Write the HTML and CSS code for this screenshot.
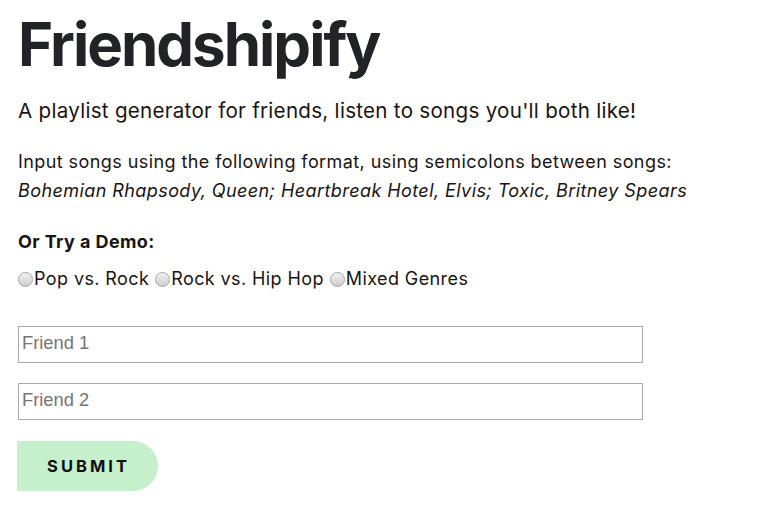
FILE: index.html
```html
<!DOCTYPE html>
<html>
<head>
<meta charset="utf-8">
<link rel="stylesheet" href="styles.css">
</head>
<body>
<main class="page">
  <h1 class="title">Friendshipify</h1>
  <p class="subtitle">A playlist generator for friends, listen to songs you'll both like!</p>
  <p class="instructions">Input songs using the following format, using semicolons between songs:<br><em>Bohemian Rhapsody, Queen; Heartbreak Hotel, Elvis; Toxic, Britney Spears</em></p>
  <p class="demo-label">Or Try a Demo:</p>
  <div class="radios">
    <label class="radio"><span class="dot"></span>Pop vs. Rock</label>
    <label class="radio"><span class="dot"></span>Rock vs. Hip Hop</label>
    <label class="radio"><span class="dot"></span>Mixed Genres</label>
  </div>
  <form class="form">
    <input class="field" type="text" placeholder="Friend 1">
    <input class="field" type="text" placeholder="Friend 2">
    <button class="submit" type="button">SUBMIT</button>
  </form>
</main>
</body>
</html>
```

FILE: styles.css
```css
* { box-sizing: border-box; }
body {
  margin: 0;
  background: #fff;
  color: #191414;
  font-family: "Inter", "Noto Sans", sans-serif;
}
.page {
  padding: 0 18px;
}
.title {
  margin: 0;
  padding-top: 14px;
  font-size: 60px;
  line-height: 60px;
  font-weight: 700;
  letter-spacing: -2px;
  color: #222326;
}
.subtitle {
  margin: 24px 0 0;
  font-size: 20.6px;
  line-height: 26px;
  letter-spacing: 0.27px;
}
.instructions {
  margin: 24px 0 0;
  font-size: 18px;
  line-height: 28.5px;
  letter-spacing: 0.42px;
}
.instructions em { font-style: italic; }
.demo-label {
  margin: 26px 0 0;
  font-size: 18px;
  font-weight: 700;
  line-height: 22px;
  letter-spacing: 0.4px;
}
.radios {
  display: flex;
  margin-top: 14px;
  font-size: 18px;
  line-height: 24px;
  letter-spacing: 0.4px;
  gap: 6px;
}
.radio {
  display: flex;
  align-items: center;
}
.dot {
  width: 15px;
  height: 15px;
  border-radius: 50%;
  border: 1px solid #a6a6a6;
  background: linear-gradient(#f2f2f2, #cdcdcd);
  margin-right: 1px;
}
.form {
  display: flex;
  flex-direction: column;
  align-items: flex-start;
  margin-top: 35px;
}
.field {
  width: 625px;
  height: 37px;
  border: 1px solid #a9a9a9;
  padding: 0 3px 3px;
  font-family: "Liberation Sans", Arial, sans-serif;
  font-size: 18.3px;
  margin: 0 0 20px;
  outline: none;
}
.field::placeholder { color: #757575; }
.submit {
  margin-left: -1px;
  margin-top: 1px;
  width: 141px;
  height: 50px;
  border: none;
  border-radius: 0 25px 25px 0;
  background: #c6f0cb;
  color: #111;
  font-family: "Inter", sans-serif;
  font-weight: 700;
  font-size: 16.5px;
  letter-spacing: 3px;
  padding: 0 0 0 2px;
}
```
